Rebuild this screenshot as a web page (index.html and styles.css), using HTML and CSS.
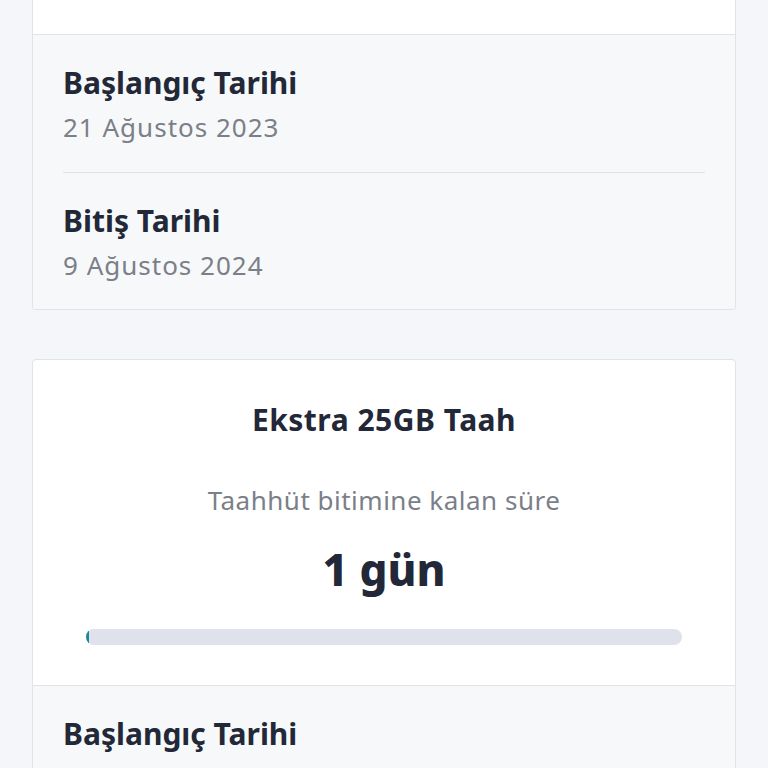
FILE: index.html
```html
<!doctype html>
<html lang="tr">
<head>
  <meta charset="UTF-8"/>
  <meta name="viewport" content="width=device-width, initial-scale=1.0"/>
  <title>Taahhüt</title>
  <link rel="stylesheet" href="styles.css">
</head>
<body>
  <div class="card card-first">
    <div class="card-top"></div>
    <div class="card-details">
      <div class="detail">
        <div class="detail-label">Başlangıç Tarihi</div>
        <div class="detail-value">21 Ağustos 2023</div>
      </div>
      <div class="detail">
        <div class="detail-label">Bitiş Tarihi</div>
        <div class="detail-value">9 Ağustos 2024</div>
      </div>
    </div>
  </div>

  <div class="card">
    <div class="card-top summary">
      <h2 class="summary-title">Ekstra 25GB Taah</h2>
      <div class="summary-caption">Taahhüt bitimine kalan süre</div>
      <div class="summary-count">1 gün</div>
      <div class="progress">
        <div class="progress-fill" style="width: 0.5%"></div>
      </div>
    </div>
    <div class="card-details">
      <div class="detail">
        <div class="detail-label">Başlangıç Tarihi</div>
        <div class="detail-value">21 Ağustos 2023</div>
      </div>
    </div>
  </div>
</body>
</html>
```

FILE: styles.css
```css
body {
  margin: 0;
  padding: 0 32px;
  background: #f5f6f9;
  font-family: 'Noto Sans', Lato, sans-serif;
  color: #222838;
}

.card {
  background: #fff;
  border: 1px solid #e1e3e9;
  border-radius: 4px;
  margin-bottom: 49px;
  overflow: hidden;
}

.card-first {
  border-top: none;
  border-radius: 0 0 4px 4px;
}

.card-top {
  height: 34px;
  border-bottom: 1px solid #e1e3e9;
}

.card-details {
  background: #f7f8fa;
  padding: 0 30px 0 30px;
}

.detail {
  padding: 30px 0 29px;
}

.detail:last-child {
  padding-bottom: 28px;
}

.detail + .detail {
  border-top: 1px solid #dfe1e6;
}

.detail-label {
  font-size: 30px;
  font-weight: bold;
  line-height: 36px;
  color: #222838;
}

.detail-value {
  font-size: 26px;
  line-height: 32px;
  letter-spacing: 1px;
  margin-top: 10px;
  color: #7b7f88;
}

.summary {
  height: auto;
  text-align: center;
  padding: 42px 53px 40px;
}

.summary-title {
  margin: 0;
  font-size: 30px;
  line-height: 36px;
  letter-spacing: 0.5px;
  font-weight: bold;
}

.summary-caption {
  margin-top: 46px;
  font-size: 26px;
  line-height: 32px;
  letter-spacing: 0.5px;
  color: #7b7f88;
}

.summary-count {
  margin-top: 25px;
  font-size: 44px;
  line-height: 56px;
  font-weight: 800;
}

.progress {
  margin-top: 32px;
  height: 16px;
  background: #dfe1eb;
  border-radius: 8px;
  overflow: hidden;
}

.progress-fill {
  height: 100%;
  min-width: 3px;
  background: #1a8a96;
}
```
